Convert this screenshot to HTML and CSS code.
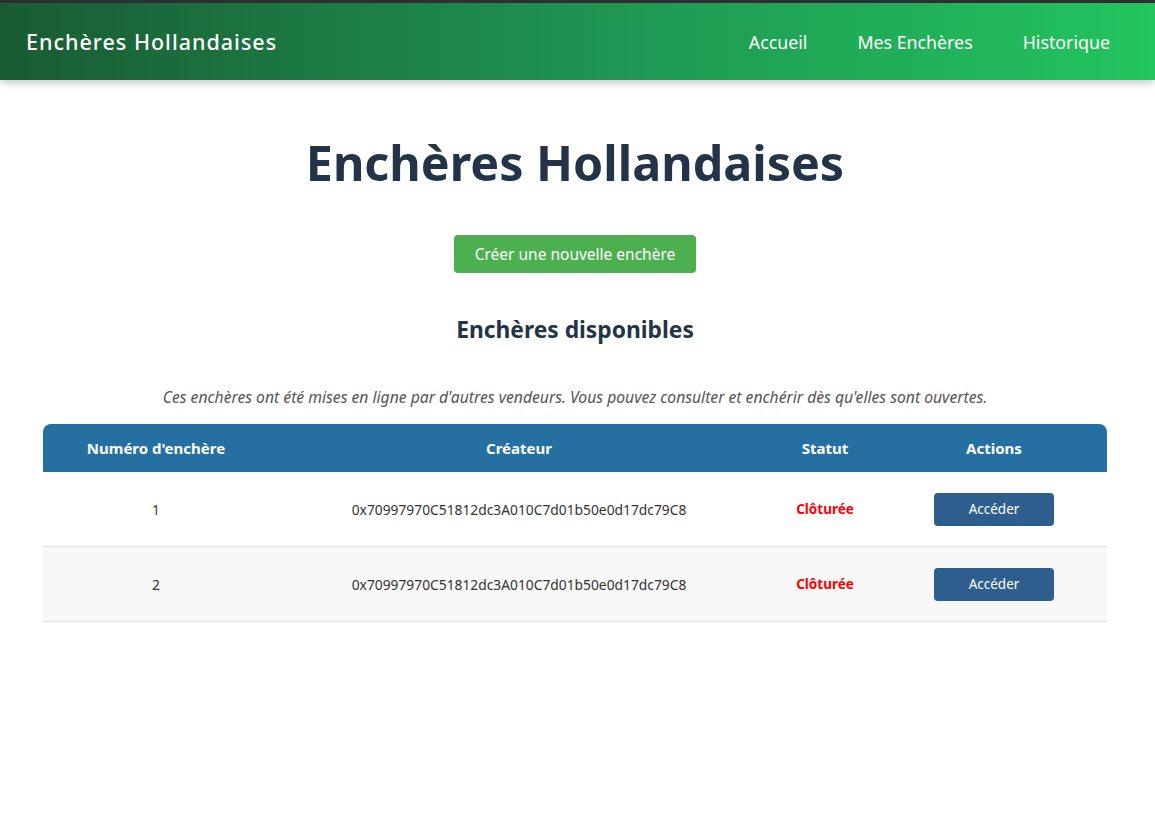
FILE: index.html
```html
<!DOCTYPE html>
<html lang="fr">
<head>
<meta charset="utf-8">
<title>Enchères Hollandaises</title>
<link rel="stylesheet" href="styles.css">
</head>
<body>
<header class="navbar">
  <div class="brand">Enchères Hollandaises</div>
  <nav class="nav-links">
    <a href="#">Accueil</a>
    <a href="#">Mes Enchères</a>
    <a href="#">Historique</a>
  </nav>
</header>
<main class="container">
  <h1 class="title">Enchères Hollandaises</h1>
  <div class="create-wrap"><button class="btn-create">Créer une nouvelle enchère</button></div>
  <h2 class="subtitle">Enchères disponibles</h2>
  <p class="intro">Ces enchères ont été mises en ligne par d'autres vendeurs. Vous pouvez consulter et enchérir dès qu'elles sont ouvertes.</p>
  <table class="auctions">
    <thead>
      <tr>
        <th class="c1">Numéro d'enchère</th>
        <th class="c2">Créateur</th>
        <th class="c3">Statut</th>
        <th class="c4">Actions</th>
      </tr>
    </thead>
    <tbody>
      <tr>
        <td>1</td>
        <td>0x70997970C51812dc3A010C7d01b50e0d17dc79C8</td>
        <td class="status">Clôturée</td>
        <td><button class="btn-access">Accéder</button></td>
      </tr>
      <tr>
        <td>2</td>
        <td>0x70997970C51812dc3A010C7d01b50e0d17dc79C8</td>
        <td class="status">Clôturée</td>
        <td><button class="btn-access">Accéder</button></td>
      </tr>
    </tbody>
  </table>
</main>
</body>
</html>
```
FILE: styles.css
```css
* { box-sizing: border-box; }
html, body { margin: 0; padding: 0; background: #fff; }
body {
  font-family: "Noto Sans", "DejaVu Sans", sans-serif;
  color: #333;
  border-top: 3px solid #2e2f33;
}
.navbar {
  height: 77px;
  display: flex;
  align-items: center;
  justify-content: space-between;
  padding: 0 20px 0 26px;
  background: linear-gradient(90deg, #195b33 0%, #1f9853 55%, #22c55e 100%);
  box-shadow: 0 3px 8px rgba(0, 0, 0, 0.22);
  position: relative;
}
.brand {
  color: #fff;
  font-size: 21.5px;
  font-weight: 500;
  letter-spacing: 1px;
}
.nav-links { display: flex; }
.nav-links a {
  color: #fff;
  text-decoration: none;
  font-size: 17.8px;
  padding: 0 25px;
}
.container {
  padding: 0 48px 0 43px;
  display: flex;
  flex-direction: column;
  align-items: center;
}
.title {
  margin: 50px 0 0;
  font-size: 48.4px;
  font-weight: 700;
  color: #233448;
  line-height: 64px;
}
.create-wrap { margin-top: 41px; }
.btn-create {
  font-family: inherit;
  background: #4caf50;
  color: #fff;
  border: none;
  border-radius: 4px;
  width: 242px;
  height: 38px;
  font-size: 15.5px;
  padding: 0;
}
.subtitle {
  margin: 42px 0 0;
  font-size: 22.8px;
  font-weight: 700;
  color: #233448;
  line-height: 30px;
}
.intro {
  margin: 40px 0 0;
  font-size: 15.7px;
  font-style: italic;
  color: #555;
  line-height: 24px;
}
.auctions {
  margin-top: 15px;
  width: 100%;
  border-collapse: separate;
  border-spacing: 0;
  font-size: 13.8px;
}
.auctions th {
  background: #2570a1;
  color: #fff;
  font-weight: 700;
  font-size: 15px;
  height: 48px;
  padding: 0;
}
.auctions th.c1 { width: 226px; border-top-left-radius: 8px; }
.auctions th.c2 { width: 500px; }
.auctions th.c3 { width: 112px; }
.auctions th.c4 { border-top-right-radius: 8px; }
.auctions td {
  height: 75px;
  text-align: center;
  padding: 0;
  border-bottom: 1px solid #dedede;
  color: #333;
}
.auctions tbody tr:nth-child(2) td { background: #f8f8f8; }
.status { color: #f00 !important; font-weight: 700; font-size: 13.5px; }
.btn-access {
  font-family: inherit;
  background: #2e5e8e;
  color: #fff;
  border: none;
  border-radius: 4px;
  width: 120px;
  height: 33px;
  font-size: 13.5px;
  padding: 0;
}
```
